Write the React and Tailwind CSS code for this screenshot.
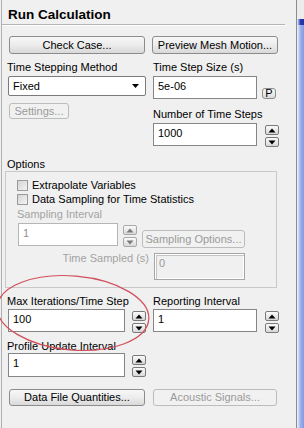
import React from "react";

const F = { fontFamily: '"Liberation Sans", Arial, sans-serif' };

function Btn({ children, disabled, className = "" }) {
  return (
    <div
      className={
        "flex items-center justify-center rounded-[3px] border text-[11px] leading-[13px] " +
        (disabled
          ? "border-[#bcbcbc] bg-[#f1f1f1] text-[#9a9a9a] "
          : "border-[#8c8c8c] bg-gradient-to-b from-[#f7f7f7] via-[#ececec] to-[#d9d9d9] text-black ") +
        className
      }
    >
      {children}
    </div>
  );
}

function Input({ value, className = "", disabled }) {
  return (
    <div
      className={
        "border bg-white pl-[4px] pt-[3px] text-[11px] leading-[13px] " +
        (disabled ? "border-[#b5b5b5] text-[#8f8f8f] " : "border-[#858585] text-black ") +
        className
      }
    >
      {value}
    </div>
  );
}

function Tri({ down, disabled }) {
  return (
    <svg width="8" height="5" viewBox="0 0 8 5">
      <path
        d={down ? "M0.5 0.5 L7.5 0.5 L4 4.5 Z" : "M0.5 4.5 L7.5 4.5 L4 0.5 Z"}
        fill={disabled ? "#7a7a7a" : "#000"}
      />
    </svg>
  );
}

function SpinBtn({ down, disabled }) {
  return (
    <div
      className={
        "flex h-[10px] w-[14px] items-center justify-center rounded-[2px] border bg-gradient-to-b from-[#fbfbfb] to-[#d8d8d8] " +
        (disabled ? "border-[#a9a9a9]" : "border-[#7a7a7a]")
      }
    >
      <Tri down={down} disabled={disabled} />
    </div>
  );
}

function Spinner({ disabled, className = "" }) {
  return (
    <div className={"flex flex-col gap-[2px] pt-[2px] " + className}>
      <SpinBtn disabled={disabled} />
      <SpinBtn down disabled={disabled} />
    </div>
  );
}

function Label({ children, className = "", disabled }) {
  return (
    <div
      className={
        "h-[13px] whitespace-nowrap text-[11px] leading-[13px] " +
        (disabled ? "text-[#a3a3a3] " : "text-black ") +
        className
      }
    >
      {children}
    </div>
  );
}

function Check({ label }) {
  return (
    <div className="flex h-[11px] items-center gap-[4px]">
      <div className="h-[11px] w-[11px] border border-[#9a9a9a] bg-gradient-to-br from-[#d4d4d4] to-[#f4f4f4]" />
      <span className="whitespace-nowrap text-[11px] leading-[13px] text-black">{label}</span>
    </div>
  );
}

export default function App() {
  return (
    <div className="relative flex h-[428px] w-[304px] overflow-hidden bg-[#f0f0f0]" style={F}>
      {/* main panel */}
      <div className="ml-[1px] flex h-full w-[296px] flex-col border-l border-r border-l-[#b0b0b0] border-r-[#8c8c8c]">
        {/* title */}
        <div className="pl-[6px] pt-[6px]">
          <div className="h-[17px] text-[13.5px] font-bold leading-[17px] text-black">Run Calculation</div>
        </div>
        <div className="mt-[1px] h-px w-[283px] bg-[#b4b4b4]" />
        <div className="h-px w-[283px] bg-white" />

        {/* section A */}
        <div className="mt-[10px] flex">
          <div className="ml-[5px] flex w-[146px] flex-col">
            <Btn className="ml-[2px] h-[18px] w-[136px]">Check Case...</Btn>
            <Label className="mt-[7px]">Time Stepping Method</Label>
            <div className="ml-[1px] mt-[2px] flex h-[20px] w-[138px] items-center justify-between rounded-[2px] border border-[#7a7a7a] bg-white pl-[4px] pr-[6px]">
              <span className="text-[11px] leading-[13px]">Fixed</span>
              <svg width="7" height="4" viewBox="0 0 7 4">
                <path d="M0 0 L7 0 L3.5 4 Z" fill="#000" />
              </svg>
            </div>
            <Btn disabled className="ml-[2px] mt-[7px] h-[16px] w-[60px]">Settings...</Btn>
          </div>
          <div className="flex flex-col">
            <Btn className="-ml-[1px] h-[18px] w-[126px]">Preview Mesh Motion...</Btn>
            <Label className="mt-[7px]">Time Step Size (s)</Label>
            <div className="mt-[2px] flex items-end">
              <Input value="5e-06" className="h-[23px] w-[104px]" />
              <Btn className="ml-[5px] h-[11px] w-[14px] rounded-[2px] text-[9px] leading-[9px]">P</Btn>
            </div>
            <Label className="mt-[9px]">Number of Time Steps</Label>
            <div className="mt-[2px] flex">
              <Input value="1000" className="h-[23px] w-[104px]" />
              <Spinner className="ml-[8px]" />
            </div>
          </div>
        </div>

        {/* options */}
        <Label className="ml-[5px] mt-[11px] h-[12px]">Options</Label>
        <div className="ml-[3px] flex h-[117px] w-[272px] flex-col border border-[#c9c9c9]">
          <div className="ml-[11px] mt-[8px] flex flex-col gap-[3px]">
            <Check label="Extrapolate Variables" />
            <Check label="Data Sampling for Time Statistics" />
          </div>
          <Label disabled className="ml-[11px] mt-[3px]">Sampling Interval</Label>
          <div className="ml-[12px] mt-[2px] flex">
            <Input disabled value="1" className="h-[23px] w-[100px]" />
            <Spinner disabled className="ml-[5px]" />
            <Btn disabled className="ml-[5px] mt-[7px] h-[18px] w-[103px]">Sampling Options...</Btn>
          </div>
          <div className="mt-[5px] flex">
            <div className="-mt-[1px] w-[143px] text-right text-[11px] leading-[13px] text-[#a3a3a3]">Time Sampled (s)</div>
            <div className="ml-[5px] h-[27px] w-[91px] border border-[#a6a6a6] bg-[#f0f0f0] pl-[4px] pt-[3px] text-[11px] leading-[13px] text-[#9a9a9a] shadow-[inset_1px_1px_0_#ffffff,inset_2px_2px_0_#c4c4c4,inset_-1px_-1px_0_#ffffff]">
              0
            </div>
          </div>
        </div>

        {/* max iterations / reporting */}
        <div className="mt-[7px] flex">
          <div className="ml-[5px] flex w-[146px] flex-col">
            <Label>Max Iterations/Time Step</Label>
            <div className="ml-[1px] mt-[1px] flex">
              <Input value="100" className="h-[23px] w-[117px]" />
              <Spinner className="ml-[7px]" />
            </div>
            <Label className="mt-[7px]">Profile Update Interval</Label>
            <div className="ml-[1px] mt-[0px] flex">
              <Input value="1" className="h-[24px] w-[117px]" />
              <Spinner className="ml-[7px]" />
            </div>
          </div>
          <div className="flex flex-col">
            <Label>Reporting Interval</Label>
            <div className="mt-[1px] flex">
              <Input value="1" className="h-[23px] w-[104px]" />
              <Spinner className="ml-[8px]" />
            </div>
          </div>
        </div>

        {/* bottom buttons */}
        <div className="mt-[12px] flex">
          <Btn className="ml-[7px] h-[17px] w-[136px]">Data File Quantities...</Btn>
          <Btn disabled className="ml-[8px] h-[17px] w-[124px]">Acoustic Signals...</Btn>
        </div>
      </div>

      {/* right strip */}
      <div className="flex h-full flex-1 flex-col">
        <div className="h-[19px] bg-[#ececec]" />
        <div className="h-[6px] bg-gradient-to-r from-[#f4f4f4] via-[#2a38b0] to-[#2030a0]" />
        <div className="flex-1 bg-gradient-to-r from-[#f2f4fb] via-[#9db1ea] to-[#8199e2]" />
      </div>

      {/* red annotation ellipse */}
      <svg
        className="pointer-events-none absolute left-0 top-0"
        width="304"
        height="428"
        viewBox="0 0 304 428"
      >
        <ellipse
          cx="73"
          cy="313"
          rx="76"
          ry="37"
          transform="rotate(5 73 313)"
          fill="none"
          stroke="#d24f5c"
          strokeWidth="1.2"
        />
      </svg>
    </div>
  );
}
